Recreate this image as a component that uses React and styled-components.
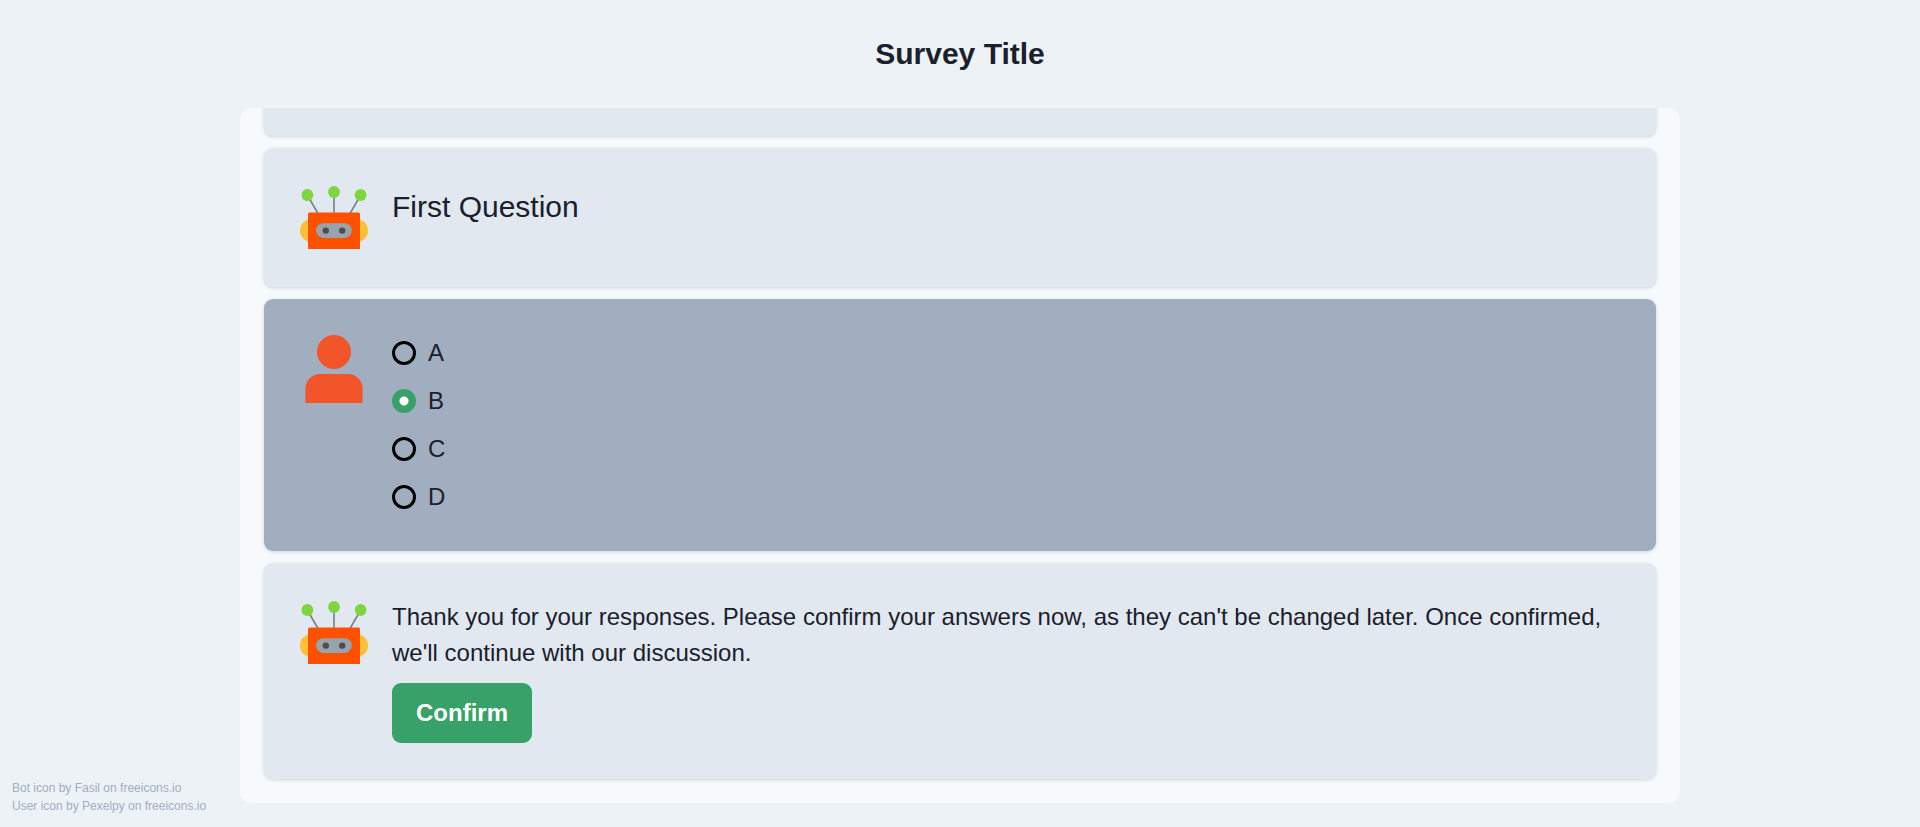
import React, { useState } from "react";
import styled, { createGlobalStyle } from "styled-components";

const GlobalStyle = createGlobalStyle`
  *, *::before, *::after { box-sizing: border-box; }
  body {
    margin: 0;
    background: #edf2f7;
    color: #1a202c;
    font-family: "Liberation Sans", Arial, sans-serif;
    font-size: 24px;
    line-height: 36px;
  }
`;

const Page = styled.div`
  display: grid;
  grid-template-columns: 1fr 6fr 1fr;
  grid-template-rows: auto minmax(0, 1fr);
  height: 100vh;
`;

const Header = styled.header`
  grid-column: 1 / -1;
  padding: 36px 24px;
  text-align: center;
`;

const Title = styled.h1`
  margin: 0;
  font-size: 30px;
  line-height: 36px;
  font-weight: 700;
`;

const Credits = styled.footer`
  align-self: end;
  display: flex;
  flex-direction: column;
  padding: 12px;
  font-size: 12px;
  line-height: 18px;
`;

const CreditLink = styled.a`
  color: #a0aec0;
  text-decoration: none;
  white-space: nowrap;
`;

const Chat = styled.main`
  display: flex;
  flex-direction: column;
  justify-content: flex-end;
  gap: 12px;
  margin-bottom: 24px;
  padding: 24px;
  overflow: hidden;
  border-radius: 12px;
  background: #f7fafc;
`;

const Card = styled.section`
  display: flex;
  flex-shrink: 0;
  gap: 24px;
  padding: 36px;
  border-radius: 9px;
  background: ${({ $user }) => ($user ? "#a0aec0" : "#e2e8f0")};
  box-shadow: 0 1px 4px rgba(0, 0, 0, 0.1), 0 1px 3px rgba(0, 0, 0, 0.06);
`;

const Avatar = styled.svg`
  flex: none;
  width: 68px;
  height: 67px;
  overflow: visible;
`;

const Content = styled.div`
  flex: 1;
  min-width: 0;
  display: flex;
  flex-direction: column;
  align-items: flex-start;
  gap: 12px;
`;

const Question = styled.h2`
  margin: 0;
  font-size: 30px;
  line-height: 45px;
  font-weight: 400;
`;

const Message = styled.p`
  margin: 0;
`;

const Options = styled.div`
  display: flex;
  flex-direction: column;
  gap: 12px;
`;

const Option = styled.label`
  display: flex;
  align-items: center;
  gap: 12px;
  cursor: pointer;
`;

const Radio = styled.input`
  appearance: none;
  width: 24px;
  height: 24px;
  margin: 0;
  border: 3px solid #000;
  border-radius: 50%;
  cursor: pointer;

  &:checked {
    border-color: #38a169;
    background: radial-gradient(circle, #fff 4px, #38a169 5px);
  }
`;

const ConfirmButton = styled.button`
  height: 60px;
  padding: 0 24px;
  border: 0;
  border-radius: 9px;
  background: #38a169;
  color: #fff;
  font: inherit;
  font-weight: 700;
  cursor: pointer;
`;

function BotAvatar() {
  return (
    <Avatar viewBox="0 0 68 67" role="img" aria-label="Bot">
      <g stroke="#7d858c" strokeWidth="1.7">
        <path d="M7.3 11 L18.3 30 M34 8 V30 M60.7 11 L49.7 30" />
      </g>
      <g fill="#7ed63e">
        <circle cx="7.4" cy="11" r="5.9" />
        <circle cx="34" cy="8" r="5.9" />
        <circle cx="60.6" cy="11" r="5.9" />
      </g>
      <g fill="#fdbf35">
        <circle cx="11.7" cy="46.6" r="11.7" />
        <circle cx="56.3" cy="46.6" r="11.7" />
      </g>
      <path
        fill="#ff5000"
        d="M8 65 V30.2 Q8 28.4 9.8 28.4 H58.2 Q60 28.4 60 30.2 V65 Z"
      />
      <rect x="16.1" y="39.2" width="35.7" height="14.8" rx="7.4" fill="#99a3ab" />
      <g fill="#4d4d4d">
        <circle cx="25.8" cy="46.6" r="3.2" />
        <circle cx="42.2" cy="46.6" r="3.2" />
      </g>
    </Avatar>
  );
}

function UserAvatar() {
  return (
    <Avatar viewBox="0 0 68 67" role="img" aria-label="User" fill="#f15529">
      <circle cx="34" cy="17" r="17" />
      <path d="M5.4 68 V53.8 A14.8 14.8 0 0 1 20.2 39 H47.8 A14.8 14.8 0 0 1 62.6 53.8 V68 Z" />
    </Avatar>
  );
}

export default function App() {
  const [answer, setAnswer] = useState("B");

  return (
    <>
      <GlobalStyle />
      <Page>
        <Header>
          <Title>Survey Title</Title>
        </Header>
        <Credits>
          <CreditLink href="#bot-icon">Bot icon by Fasil on freeicons.io</CreditLink>
          <CreditLink href="#user-icon">User icon by Pexelpy on freeicons.io</CreditLink>
        </Credits>
        <Chat>
          <Card />
          <Card>
            <BotAvatar />
            <Content>
              <Question id="question">First Question</Question>
            </Content>
          </Card>
          <Card $user>
            <UserAvatar />
            <Options role="radiogroup" aria-labelledby="question">
              {["A", "B", "C", "D"].map((option) => (
                <Option key={option}>
                  <Radio
                    type="radio"
                    name="answer"
                    value={option}
                    checked={answer === option}
                    onChange={() => setAnswer(option)}
                  />
                  {option}
                </Option>
              ))}
            </Options>
          </Card>
          <Card>
            <BotAvatar />
            <Content>
              <Message>
                Thank you for your responses. Please confirm your answers now, as
                they can't be changed later. Once confirmed, we'll continue with
                our discussion.
              </Message>
              <ConfirmButton type="button">Confirm</ConfirmButton>
            </Content>
          </Card>
        </Chat>
      </Page>
    </>
  );
}
